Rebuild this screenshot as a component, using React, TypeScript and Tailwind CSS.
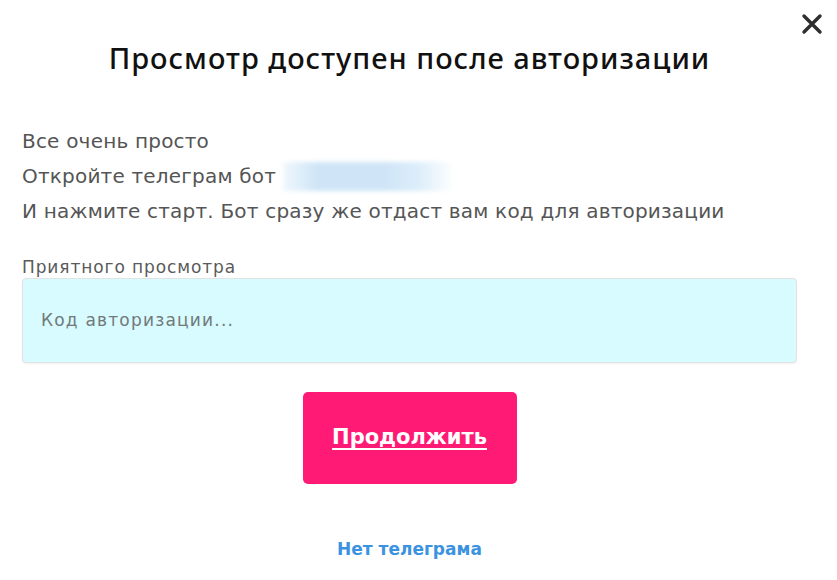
import React from "react";

export default function App() {
  return (
    <div
      className="relative w-[837px] h-[580px] bg-white overflow-hidden"
      style={{ fontFamily: '"DejaVu Sans", "Noto Sans", sans-serif' }}
    >
      <button className="absolute right-[13px] top-[12px] w-[24px] h-[24px] flex items-center justify-center">
        <svg width="22" height="22" viewBox="0 0 22 22">
          <path d="M3 3 L19 19 M19 3 L3 19" stroke="#2e2e2e" strokeWidth="3.4" strokeLinecap="round" />
        </svg>
      </button>
      <div className="flex flex-col pl-[22px] pr-[40px] pt-[38px]">
        <h1
          className="text-center text-[29px] leading-[40px] font-medium text-[#111] tracking-[1px]"
          style={{ fontFamily: '"Noto Sans", sans-serif' }}
        >
          Просмотр доступен после авторизации
        </h1>
        <div className="mt-[46px] flex flex-col text-[20px] leading-[35px] text-[#555] tracking-[0.2px]">
          <div>Все очень просто</div>
          <div className="flex items-center">
            <span>Откройте телеграм бот</span>
            <span className="ml-[7px] h-[29px] w-[171px] bg-[linear-gradient(90deg,#f1f7fd_0%,#cfe5f7_20%,#cfe5f7_60%,#ddeefa_80%,#ffffff_100%)] blur-[2px]" />
          </div>
          <div>И нажмите старт. Бот сразу же отдаст вам код для авторизации</div>
        </div>
        <label className="mt-[28px] text-[17px] leading-[20px] text-[#5a5a5a] tracking-[0.9px]">Приятного просмотра</label>
        <div className="mt-[1px] h-[85px] w-full rounded-[4px] border border-[#e2e2e2] bg-[#d7fbfe] flex items-center px-[18px] shadow-[0_1px_2px_rgba(0,0,0,0.06)]">
          <span className="text-[17px] text-[#72797a] tracking-[1.2px]">Код авторизации...</span>
        </div>
        <div className="mt-[29px] flex justify-center">
          <button className="w-[214px] h-[92px] rounded-[5px] bg-[#ff1a75] text-white text-[21px] font-bold underline underline-offset-[4px] decoration-[2px]">
            Продолжить
          </button>
        </div>
        <div className="mt-[53px] text-center text-[17px] font-bold text-[#3b93df]">Нет телеграма</div>
      </div>
    </div>
  );
}
